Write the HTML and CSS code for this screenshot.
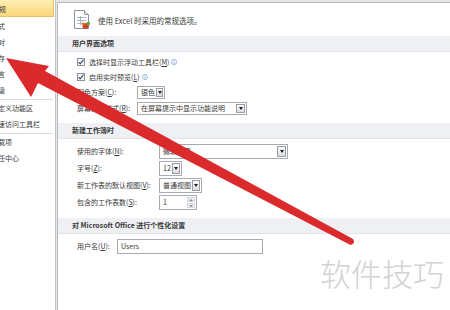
FILE: index.html
```html
<!DOCTYPE html>
<html lang="zh-CN">
<head>
    <meta charset="UTF-8">
    <title>Excel 选项</title>
    <link rel="stylesheet" href="styles.css">
</head>
<body>
    <div class="dialog">
        <!-- Category list -->
        <ul class="nav">
            <li class="nav-item selected">常规</li>
            <li class="nav-item">公式</li>
            <li class="nav-item">校对</li>
            <li class="nav-item">保存</li>
            <li class="nav-item">语言</li>
            <li class="nav-item">高级</li>
            <li class="nav-sep"></li>
            <li class="nav-item">自定义功能区</li>
            <li class="nav-item">快速访问工具栏</li>
            <li class="nav-sep"></li>
            <li class="nav-item">加载项</li>
            <li class="nav-item">信任中心</li>
        </ul>

        <!-- General options -->
        <div class="panel">
            <div class="intro">
                <svg class="intro-icon" width="18" height="20" viewBox="0 0 18 20">
                    <path d="M1.5 .5h10l4 4v14h-14z" fill="#fff" stroke="#8d939c"/>
                    <path d="M11.5 .5v4h4" fill="#e8ebef" stroke="#8d939c"/>
                    <path d="M4 7.5h9M4 10.5h9M4 13.5h5M7.5 6v9" stroke="#a9b4c3"/>
                    <circle cx="12.5" cy="16" r="3" fill="#d2412c"/>
                    <circle cx="15.2" cy="13.6" r="1.9" fill="#5aa23a"/>
                    <circle cx="10" cy="13.8" r="1.5" fill="#e98a2b"/>
                </svg>
                <span>使用 Excel 时采用的常规选项。</span>
            </div>

            <div class="section-title">用户界面选项</div>
            <div class="section ui-section">
                <div class="check-row">
                    <span class="checkbox"><svg width="6" height="6" viewBox="0 0 6 6"><path d="M.6 3.1l1.6 1.7L5.4.8" fill="none" stroke="#3c4d6b" stroke-width="1.2"/></svg></span>
                    选择时显示浮动工具栏(<u>M</u>)
                    <svg class="info" width="6" height="6" viewBox="0 0 6 6"><circle cx="3" cy="3" r="2.6" fill="none" stroke="#7aa3d4" stroke-width=".7"/><path d="M3 2.6v2M3 1.4v.6" stroke="#5b88c0" stroke-width=".8"/></svg>
                </div>
                <div class="check-row">
                    <span class="checkbox"><svg width="6" height="6" viewBox="0 0 6 6"><path d="M.6 3.1l1.6 1.7L5.4.8" fill="none" stroke="#3c4d6b" stroke-width="1.2"/></svg></span>
                    启用实时预览(<u>L</u>)
                    <svg class="info" width="6" height="6" viewBox="0 0 6 6"><circle cx="3" cy="3" r="2.6" fill="none" stroke="#7aa3d4" stroke-width=".7"/><path d="M3 2.6v2M3 1.4v.6" stroke="#5b88c0" stroke-width=".8"/></svg>
                </div>
                <div class="fields fields-ui">
                    <span>配色方案(<u>C</u>):</span>
                    <div class="select small w-28"><span class="select-value">银色</span><span class="drop"></span></div>
                    <span>屏幕提示样式(<u>R</u>):</span>
                    <div class="select small w-110"><span class="select-value">在屏幕提示中显示功能说明</span><span class="drop"></span></div>
                </div>
            </div>

            <div class="section-title">新建工作簿时</div>
            <div class="section">
                <div class="fields fields-book">
                    <span>使用的字体(<u>N</u>):</span>
                    <div class="select w-129"><span class="select-value">微软雅黑</span><span class="drop"></span></div>
                    <span>字号(<u>Z</u>):</span>
                    <div class="select w-23"><span class="select-value">12</span><span class="drop"></span></div>
                    <span>新工作表的默认视图(<u>V</u>):</span>
                    <div class="select w-43"><span class="select-value">普通视图</span><span class="drop"></span></div>
                    <span>包含的工作表数(<u>S</u>):</span>
                    <div class="select spin w-38"><span class="select-value">1</span><span class="spin-buttons"><span class="spin-up"></span><span class="spin-down"></span></span></div>
                </div>
            </div>

            <div class="section-title">对 Microsoft Office 进行个性化设置</div>
            <div class="section">
                <div class="fields fields-user">
                    <span>用户名(<u>U</u>):</span>
                    <div class="select w-146"><span class="select-value">Users</span></div>
                </div>
            </div>
        </div>

        <!-- Annotation drawn over the screenshot -->
        <svg class="arrow" width="450" height="310" viewBox="0 0 450 310">
            <path d="M6 58L49 66L45 71L353 239Q356 243.5 350.5 245L38 83L31 97Z" fill="#db2a2c"/>
        </svg>
        <div class="watermark">软件技巧</div>
    </div>
</body>
</html>
```

FILE: styles.css
```css
body {
    margin: 0;
    width: 450px;
    height: 310px;
    overflow: hidden;
    background-color: #e6e7e9;
    font-family: "Noto Sans CJK SC", sans-serif;
    font-size: 7px;
    color: #383838;
}
.dialog {
    position: relative;
    display: flex;
    height: 310px;
}
.nav {
    list-style: none;
    margin: 0;
    padding: 0;
    width: 55px;
    flex: none;
    background: white;
    border-right: 1px solid #c3c4c6;
    overflow: hidden;
}
.nav-item {
    height: 16px;
    line-height: 16px;
    margin-left: -9px;
    white-space: nowrap;
}
.nav-item.selected {
    box-sizing: border-box;
    height: 17px;
    line-height: 14px;
    padding-top: 2px;
    margin-right: 1px;
    margin-bottom: 1px;
    background: linear-gradient(#fdeeb4, #fbd77a);
    border: 1px solid #e6c164;
    border-top: none;
}
.nav-sep {
    height: 1px;
    margin: 1px 2px 0 0;
    background: #dcdcdc;
}
.panel {
    flex: 1;
    margin: 2px 0 0 1px;
    background: white;
    border-left: 1px solid #b8babd;
    border-top: 1px solid #b8babd;
    overflow: hidden;
}
.intro {
    box-sizing: border-box;
    height: 33px;
    display: flex;
    align-items: center;
    gap: 7px;
    padding: 1px 0 0 15px;
    font-size: 7.5px;
}
.intro-icon {
    flex: none;
}
.section-title {
    height: 15px;
    line-height: 15px;
    padding-left: 14px;
    background: #eef0f3;
    border-bottom: 1px solid #e0e3e8;
    font-weight: bold;
    white-space: nowrap;
}
.section {
    padding: 5px 0 8px 19px;
}
.ui-section {
    padding-top: 2px;
}
.check-row {
    height: 15px;
    display: flex;
    align-items: center;
    white-space: nowrap;
}
.checkbox {
    box-sizing: border-box;
    width: 8px;
    height: 8px;
    margin-right: 4px;
    display: flex;
    align-items: center;
    justify-content: center;
    border: 1px solid #8e9297;
    background: linear-gradient(#f0f0f0, #ffffff);
}
.info {
    margin-left: 2px;
}
.fields {
    display: grid;
    row-gap: 2px;
    align-items: center;
    justify-items: start;
    white-space: nowrap;
}
.fields > span {
    line-height: 15px;
}
.fields-ui {
    margin-top: 1px;
    grid-template-columns: 60px auto;
    grid-auto-rows: 14px;
}
.fields-book {
    grid-template-columns: 82px auto;
    grid-auto-rows: 15px;
}
.fields-user {
    grid-template-columns: 40px auto;
    grid-auto-rows: 15px;
}
.select {
    box-sizing: border-box;
    height: 15px;
    display: flex;
    border: 1px solid #a7acb4;
    background: white;
}
.select.small {
    height: 13px;
}
.select-value {
    flex: 1;
    padding-left: 3px;
    line-height: 13px;
}
.select.small .select-value {
    line-height: 11px;
}
.drop {
    box-sizing: border-box;
    width: 9px;
    margin: 1px;
    display: flex;
    align-items: center;
    justify-content: center;
    border: 1px solid #9b9da1;
    background: linear-gradient(#fafafa, #dadcdf);
}
.drop::after {
    content: "";
    border-top: 3px solid #1e1e1e;
    border-left: 2px solid transparent;
    border-right: 2px solid transparent;
}
.spin-buttons {
    width: 8px;
    margin: 1px;
    display: flex;
    flex-direction: column;
    gap: 1px;
}
.spin-up, .spin-down {
    flex: 1;
    display: flex;
    align-items: center;
    justify-content: center;
    background: #eceef0;
    border: 1px solid #d6d8db;
}
.spin-up::after {
    content: "";
    border-bottom: 2px solid #8a8d92;
    border-left: 2px solid transparent;
    border-right: 2px solid transparent;
}
.spin-down::after {
    content: "";
    border-top: 2px solid #8a8d92;
    border-left: 2px solid transparent;
    border-right: 2px solid transparent;
}
.w-23 { width: 23px; }
.w-28 { width: 28px; }
.w-38 { width: 38px; }
.w-43 { width: 43px; }
.w-110 { width: 110px; }
.w-129 { width: 129px; }
.w-146 { width: 146px; }
.arrow {
    position: absolute;
    left: 0;
    top: 0;
    pointer-events: none;
}
.watermark {
    position: absolute;
    left: 320px;
    top: 257px;
    font-size: 31px;
    line-height: 1;
    color: #d2d2d2;
    font-weight: 300;
    white-space: nowrap;
}
```
